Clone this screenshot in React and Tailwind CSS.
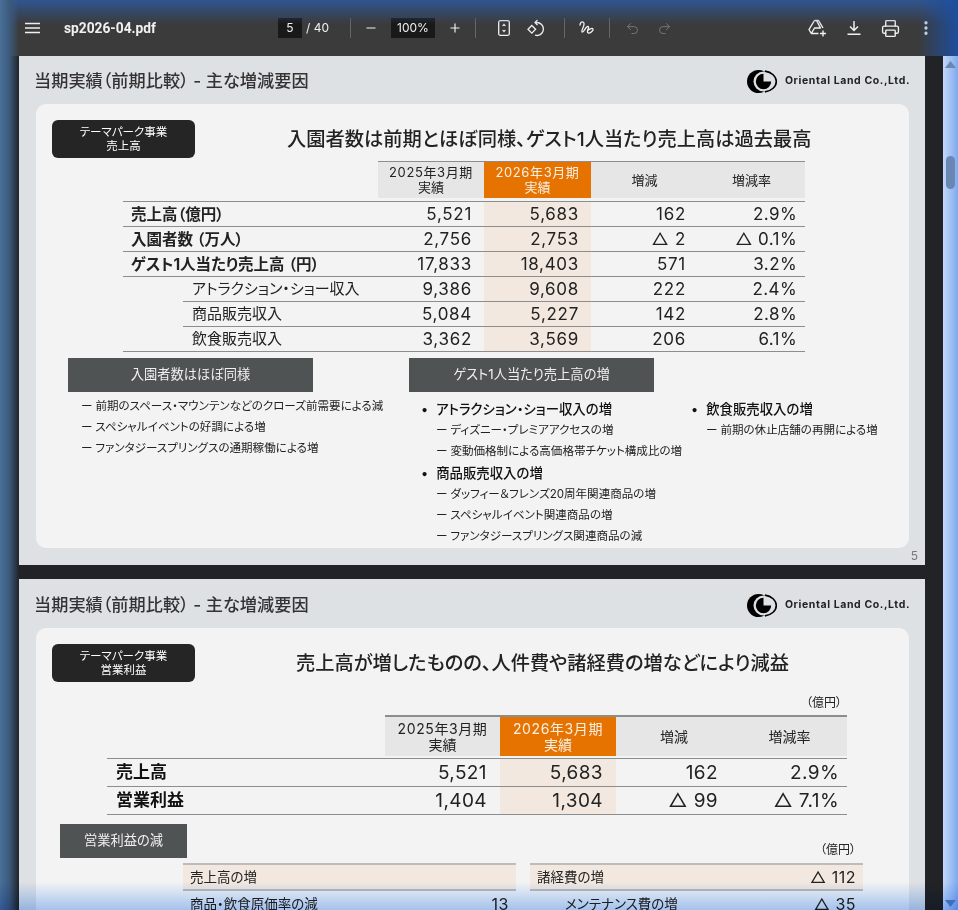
import React from 'react';
import { Minus, Plus, Undo2, Redo2, Printer, EllipsisVertical } from 'lucide-react';

const Logo = () => (
  <div className="flex items-center gap-[6px]">
    <svg width="32" height="23" viewBox="0 0 32 23">
      <circle cx="11.500" cy="11.500" r="11.500" fill="#000" />
      <circle cx="16.500" cy="11.500" r="10" fill="#dee1e4" />
      <path d="M16.500 3.800a7.700 7.700 0 1 0 7.700 7.700h-7.700z" fill="#000" />
      <path d="M18 1.100A14 10.600 0 0 1 18 21.900" fill="none" stroke="#000" strokeWidth="1.600" />
    </svg>
    <span className="text-[10.5px] font-bold tracking-[0.6px] text-[#222] whitespace-nowrap">Oriental Land Co.,Ltd.</span>
  </div>
);

const PageHeader = ({ second }) => (
  <div className={`flex items-center justify-between pl-[15px] pr-[15px] ${second ? 'h-[49px] pt-[3px]' : 'h-[48px] pt-[2px]'}`}>
    <div className="text-[17.2px] font-medium text-[#333]">当期実績（前期比較） - 主な増減要因</div>
    <Logo />
  </div>
);

const Badge = ({ top, bottom }) => (
  <div className="w-[143px] h-[38px] rounded-[6px] bg-[#252525] text-white text-[11.5px] leading-[14px] flex flex-col items-center justify-center shrink-0">
    <div>{top}</div>
    <div>{bottom}</div>
  </div>
);

const Bar = ({ children, className }) => (
  <div className={`h-[34px] bg-[#505353] text-[#f0f0f0] text-[13.25px] flex items-center justify-center ${className}`}>{children}</div>
);

const Dash = ({ children }) => (
  <div className="flex gap-[3px] text-[11.55px] h-[21px] items-center text-[#222] whitespace-nowrap">
    <span>ー</span>
    <span>{children}</span>
  </div>
);

const Bullet = ({ children }) => (
  <div className="flex gap-[8px] text-[13.4px] font-medium h-[22px] items-center text-[#111] whitespace-nowrap">
    <span>•</span>
    <span>{children}</span>
  </div>
);

const rows5 = [
  ['売上高（億円）', '5,521', '5,683', '162', '2.9%', true],
  ['入園者数 （万人）', '2,756', '2,753', '△ 2', '△ 0.1%', true],
  ['ゲスト1人当たり売上高 （円）', '17,833', '18,403', '571', '3.2%', true],
  ['アトラクション・ショー収入', '9,386', '9,608', '222', '2.4%', false],
  ['商品販売収入', '5,084', '5,227', '142', '2.8%', false],
  ['飲食販売収入', '3,362', '3,569', '206', '6.1%', false],
];

const Table5 = () => (
  <div className="ml-[87px] w-[682px] text-[#222]">
    <div className="ml-[255px] border-t border-[#8d8d8d] flex h-[37px] text-[13px] leading-[15px] text-center">
      <div className="w-[106px] bg-[#e6e6e6] flex flex-col justify-center">
        <div className="tracking-[0.6px]">2025年3月期</div>
        <div>実績</div>
      </div>
      <div className="w-[107px] bg-[#e67300] text-[#f8f0e6] flex flex-col justify-center">
        <div className="tracking-[0.6px]">2026年3月期</div>
        <div>実績</div>
      </div>
      <div className="w-[107px] bg-[#e6e6e6] flex items-center justify-center">増減</div>
      <div className="w-[107px] bg-[#e6e6e6] flex items-center justify-center">増減率</div>
    </div>
    <div className="h-[3px]" />
    <div className="h-px bg-[#8d8d8d]" />
    {rows5.map((r, i) => (
      <div key={r[0]}>
        <div className="flex h-[24px] items-center text-[17px] tracking-[0.7px]">
          <div className={`w-[255px] whitespace-nowrap tracking-normal pt-[1px] ${r[5] ? 'pl-[8px] text-[15.5px] font-bold' : 'pl-[69px] text-[15px]'}`}>{r[0]}</div>
          <div className="w-[106px] text-right pr-[12px] pt-[2px]">{r[1]}</div>
          <div className="w-[107px] h-full bg-[#f2e8df] flex items-center justify-end pr-[12px] pt-[2px]">{r[2]}</div>
          <div className="w-[107px] text-right pr-[12px] pt-[2px]">{r[3]}</div>
          <div className="w-[107px] text-right pr-[8px] pt-[2px] tracking-[0.4px]">{r[4]}</div>
        </div>
        <div className={`h-px bg-[#8d8d8d] ${i === 3 || i === 4 ? 'ml-[60px]' : ''}`} />
      </div>
    ))}
  </div>
);

const rows6 = [
  ['売上高', '5,521', '5,683', '162', '2.9%'],
  ['営業利益', '1,404', '1,304', '△ 99', '△ 7.1%'],
];

const Table6 = () => (
  <div className="ml-[71px] w-[740px] text-[#222]">
    <div className="ml-[278px] border-t-2 border-[#8d8d8d] flex h-[41px] text-[14px] leading-[16px] text-center">
      <div className="w-[115px] bg-[#e6e6e6] flex flex-col justify-center">
        <div className="tracking-[0.6px]">2025年3月期</div>
        <div>実績</div>
      </div>
      <div className="w-[116px] bg-[#e67300] text-[#f8f0e6] flex flex-col justify-center">
        <div className="tracking-[0.6px]">2026年3月期</div>
        <div>実績</div>
      </div>
      <div className="w-[116px] bg-[#e6e6e6] flex items-center justify-center">増減</div>
      <div className="w-[115px] bg-[#e6e6e6] flex items-center justify-center">増減率</div>
    </div>
    <div className="h-[2px]" />
    <div className="h-px bg-[#8d8d8d]" />
    {rows6.map((r) => (
      <div key={r[0]}>
        <div className="flex h-[27px] items-center text-[19px] tracking-[0.4px]">
          <div className="w-[278px] pl-[9px] text-[17px] tracking-normal font-bold text-[#111]">{r[0]}</div>
          <div className="w-[115px] text-right pr-[13px] pt-[2px]">{r[1]}</div>
          <div className="w-[116px] h-full bg-[#f2e8df] flex items-center justify-end pr-[13px] pt-[2px]">{r[2]}</div>
          <div className="w-[116px] text-right pr-[14px] pt-[2px]">{r[3]}</div>
          <div className="w-[115px] text-right pr-[8px] pt-[2px]">{r[4]}</div>
        </div>
        <div className="h-px bg-[#8d8d8d]" />
      </div>
    ))}
  </div>
);

const SubTable = ({ head, value, name, amount, indent }) => (
  <div className="w-[333px] text-[#222] text-[13.5px]">
    <div className="border-t-2 border-b-2 border-[#bcbcbc] flex justify-between items-center h-[28px] bg-[#f2e8df] px-[7px]">
      <span>{head}</span>
      <span className="text-[16px] tracking-[0.5px]">{value}</span>
    </div>
    <div className="flex justify-between items-center h-[26px] px-[7px]">
      <span className={indent ? 'pl-[28px]' : ''}>{name}</span>
      <span className="text-[16px] tracking-[0.5px]">{amount}</span>
    </div>
  </div>
);

const Toolbar = () => (
  <div className="h-[56px] bg-[#3b3b3b] flex items-center text-[#f1f1f1] shrink-0">
    <svg className="ml-[25px]" width="15" height="12" viewBox="0 0 15 12" stroke="#f1f1f1" strokeWidth="1.400">
      <path d="M0 1.500h15M0 6h15M0 10.500h15" />
    </svg>
    <div className="ml-[24px] w-[214px] text-[13.75px] font-bold font-['Roboto',sans-serif]">sp2026-04.pdf</div>
    <div className="w-[24px] h-[20px] bg-[#191919] text-[12px] flex items-center justify-center">5</div>
    <div className="ml-[4px] text-[12px] w-[24px] whitespace-nowrap">/ 40</div>
    <div className="ml-[20px] w-px h-[20px] bg-[#666]" />
    <Minus size={14} className="ml-[13px]" />
    <div className="ml-[13px] w-[44px] h-[20px] bg-[#191919] text-[12px] flex items-center justify-center">100%</div>
    <Plus size={14} className="ml-[13px]" />
    <div className="ml-[13px] w-px h-[20px] bg-[#666]" />
    <svg className="ml-[22px]" width="12" height="16" viewBox="0 0 12 16" fill="none" stroke="#f1f1f1" strokeWidth="1.300">
      <rect x="0.700" y="0.700" width="10.600" height="14.600" rx="1.500" />
      <path d="M6 3.800l-1.500 1.900h3zM6 12.200l-1.500-1.900h3z" fill="#f1f1f1" strokeWidth="0.500" />
    </svg>
    <svg className="ml-[17px]" width="18" height="18" viewBox="0 0 18 18" fill="none" stroke="#f1f1f1" strokeWidth="1.300">
      <path d="M4.800 6.500L8.600 10.300 4.800 14.100 1 10.300z" />
      <path d="M8.500 3.500h1.500a6.500 6.500 0 0 1 1 12.900c-1 .2-2 0-3-.4" />
      <path d="M10.500 1L8 3.500 10.500 6" />
    </svg>
    <div className="ml-[19px] w-px h-[20px] bg-[#666]" />
    <svg className="ml-[14px]" width="16" height="16" viewBox="0 0 16 16" fill="none" stroke="#f1f1f1" strokeWidth="1.300" strokeLinecap="round">
      <path d="M1 5C1.500 1 5.500 1 5 4.500 4.500 8 2 11 3 12 4.500 13 7 6 9 6.500 11 7 6.500 12.500 9.500 13 12 13.500 14.500 10 14 9 13.500 8 11 8.500 9.500 10" />
    </svg>
    <div className="ml-[14px] w-px h-[20px] bg-[#666]" />
    <Undo2 size={15} className="ml-[15px] text-[#777]" strokeWidth={1.5} />
    <Redo2 size={15} className="ml-[17px] text-[#777]" strokeWidth={1.5} />
    <svg className="ml-[136px]" width="19" height="18" viewBox="0 0 19 18" fill="none" stroke="#f1f1f1" strokeWidth="1.400" strokeLinejoin="round">
      <path d="M6.500 1.500h4l4.500 7.500M6.500 1.500L1 10.500l2.300 4h7.200M8.500 1.500L12.500 9H6.500L3.300 14.500" />
      <path d="M15 11.500v6M12 14.500h6" />
    </svg>
    <svg className="ml-[20px]" width="14" height="14" viewBox="0 0 14 14" fill="none" stroke="#f1f1f1" strokeWidth="1.500">
      <path d="M7 0v9M3 5.500l4 4 4-4M0.500 13.200h13" />
    </svg>
    <Printer size={19} className="ml-[20px]" strokeWidth={1.700} />
    <EllipsisVertical size={18} className="ml-[17px]" strokeWidth={2.400} />
  </div>
);

export default function App() {
  return (
    <div className="relative w-[958px] h-[910px] overflow-hidden bg-[#212326] font-['Inter','Noto_Sans_CJK_JP',sans-serif] [font-feature-settings:'palt']">
      <Toolbar />
      <div className="pl-[19px] w-[925px] h-[854px] overflow-hidden flex flex-col gap-[14px]">
        {/* page 5 */}
        <div className="bg-[#dee1e4] w-[906px] h-[509px] shrink-0 relative">
          <PageHeader />
          <div className="ml-[17px] w-[873px] h-[444px] bg-[#f3f3f3] rounded-[10px] pt-[16px]">
            <div className="flex items-center pl-[16px] h-[38px]">
              <Badge top="テーマパーク事業" bottom="売上高" />
              <div className="ml-[92px] text-[19.25px] font-medium text-[#222] whitespace-nowrap">入園者数は前期とほぼ同様、ゲスト1人当たり売上高は過去最高</div>
            </div>
            <div className="h-[3px]" />
            <Table5 />
            <div className="flex mt-[6px] pl-[32px]">
              <div className="w-[341px]">
                <Bar className="w-[245px]">入園者数はほぼ同様</Bar>
                <div className="pl-[13px] pt-[4px]">
                  <Dash>前期のスペース・マウンテンなどのクローズ前需要による減</Dash>
                  <Dash>スペシャルイベントの好調による増</Dash>
                  <Dash>ファンタジースプリングスの通期稼働による増</Dash>
                </div>
              </div>
              <div>
                <Bar className="w-[245px]">ゲスト1人当たり売上高の増</Bar>
                <div className="flex pl-[12px] pt-[6px]">
                  <div className="w-[270px]">
                    <Bullet>アトラクション・ショー収入の増</Bullet>
                    <div className="pl-[15px]">
                      <Dash>ディズニー・プレミアアクセスの増</Dash>
                      <Dash>変動価格制による高価格帯チケット構成比の増</Dash>
                    </div>
                    <Bullet>商品販売収入の増</Bullet>
                    <div className="pl-[15px]">
                      <Dash>ダッフィー＆フレンズ20周年関連商品の増</Dash>
                      <Dash>スペシャルイベント関連商品の増</Dash>
                      <Dash>ファンタジースプリングス関連商品の減</Dash>
                    </div>
                  </div>
                  <div>
                    <Bullet>飲食販売収入の増</Bullet>
                    <div className="pl-[15px]">
                      <Dash>前期の休止店舗の再開による増</Dash>
                    </div>
                  </div>
                </div>
              </div>
            </div>
          </div>
          <div className="absolute right-[7px] bottom-[0px] text-[12px] text-[#777]">5</div>
        </div>

        {/* page 6 */}
        <div className="bg-[#dee1e4] w-[906px] h-[509px] shrink-0">
          <PageHeader second />
          <div className="ml-[17px] w-[873px] h-[444px] bg-[#f3f3f3] rounded-[10px] pt-[16px]">
            <div className="flex items-center pl-[16px] h-[38px]">
              <Badge top="テーマパーク事業" bottom="営業利益" />
              <div className="ml-[101px] text-[19.25px] font-medium text-[#222] whitespace-nowrap">売上高が増したものの、人件費や諸経費の増などにより減益</div>
            </div>
            <div className="text-right pr-[67px] text-[12px] text-[#222] h-[33px] pt-[13px] leading-[16px]">（億円）</div>
            <Table6 />
            <div className="flex mt-[9px] pl-[24px]">
              <Bar className="w-[127px]">営業利益の減</Bar>
              <div className="ml-[633px] pt-[17px] text-[12px] text-[#222] whitespace-nowrap">（億円）</div>
            </div>
            <div className="flex gap-[14px] ml-[147px] mt-[4px]">
              <SubTable head="売上高の増" value="" name="商品・飲食原価率の減" amount="13" />
              <SubTable head="諸経費の増" value="△ 112" name="メンテナンス費の増" amount="△ 35" indent />
            </div>
          </div>
        </div>
      </div>

      {/* scrollbar */}
      <div className="absolute top-[56px] right-0 bottom-0 w-[15px] bg-gradient-to-r from-[#c3d8f6] to-[#7fa9ee] flex flex-col items-center">
        <svg className="mt-[5px]" width="11" height="7" viewBox="0 0 11 7"><path d="M5.500 0L11 7H0z" fill="#6a86b3" /></svg>
        <div className="mt-[88px] w-[9px] h-[33px] rounded-full bg-[#6a86b3]" />
      </div>

      {/* window glass edges */}
      <div className="absolute inset-x-0 top-0 h-[24px] pointer-events-none bg-gradient-to-b from-[#2f5590] to-transparent" />
      <div className="absolute left-0 top-0 bottom-0 w-[19px] pointer-events-none bg-gradient-to-r from-[#4a7099] via-[#3c5a7c] via-50% to-transparent" />
      <div className="absolute right-0 top-0 h-[56px] w-[40px] pointer-events-none bg-gradient-to-l from-[#1d4e9e] to-transparent" />
      <div className="absolute inset-x-0 bottom-0 h-[28px] pointer-events-none mix-blend-multiply bg-gradient-to-t from-[#acccf8] to-white" />
      <svg className="absolute right-[2px] bottom-[3px]" width="11" height="7" viewBox="0 0 11 7"><path d="M0 0h11L5.500 7z" fill="#3f6fb5" /></svg>
    </div>
  );
}
